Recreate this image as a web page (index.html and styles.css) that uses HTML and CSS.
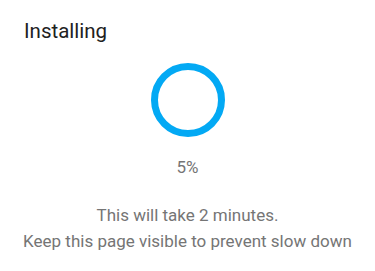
FILE: index.html
```html
<!DOCTYPE html>
<html lang="en">
<head>
    <meta charset="UTF-8">
    <meta name="viewport" content="width=device-width, initial-scale=1.0">
    <title>Installing</title>
    <link rel="stylesheet" href="styles.css">
</head>
<body>
    <div class="dialog">
        <h2 class="title">Installing</h2>
        <div class="progress">
            <svg class="ring" width="74" height="74" viewBox="0 0 74 74">
                <circle cx="37" cy="37" r="33.5" fill="none" stroke="#03a9f4" stroke-width="7"/>
            </svg>
            <div class="percent">5%</div>
        </div>
        <p class="note">This will take 2 minutes.<br>Keep this page visible to prevent slow down</p>
    </div>
</body>
</html>
```

FILE: styles.css
```css
/* Global */
body {
    margin: 0;
    background: #fff;
    font-family: Roboto, 'Noto Sans', sans-serif;
}

/* Dialog */
.dialog {
    width: 375px;
    height: 271px;
    padding: 18px 24px 0;
    box-sizing: border-box;
}

.title {
    margin: 0;
    font-size: 20.5px;
    font-weight: 400;
    line-height: 26px;
    color: #212121;
}

/* Progress ring */
.progress {
    display: flex;
    flex-direction: column;
    align-items: center;
    margin-top: 19px;
}

.ring {
    display: block;
}

.percent {
    margin-top: 19px;
    font-size: 17px;
    line-height: 22px;
    color: #757575;
}

.note {
    margin: 24px -16px 0;
    text-align: center;
    font-size: 17px;
    line-height: 26px;
    color: #757575;
}
```
